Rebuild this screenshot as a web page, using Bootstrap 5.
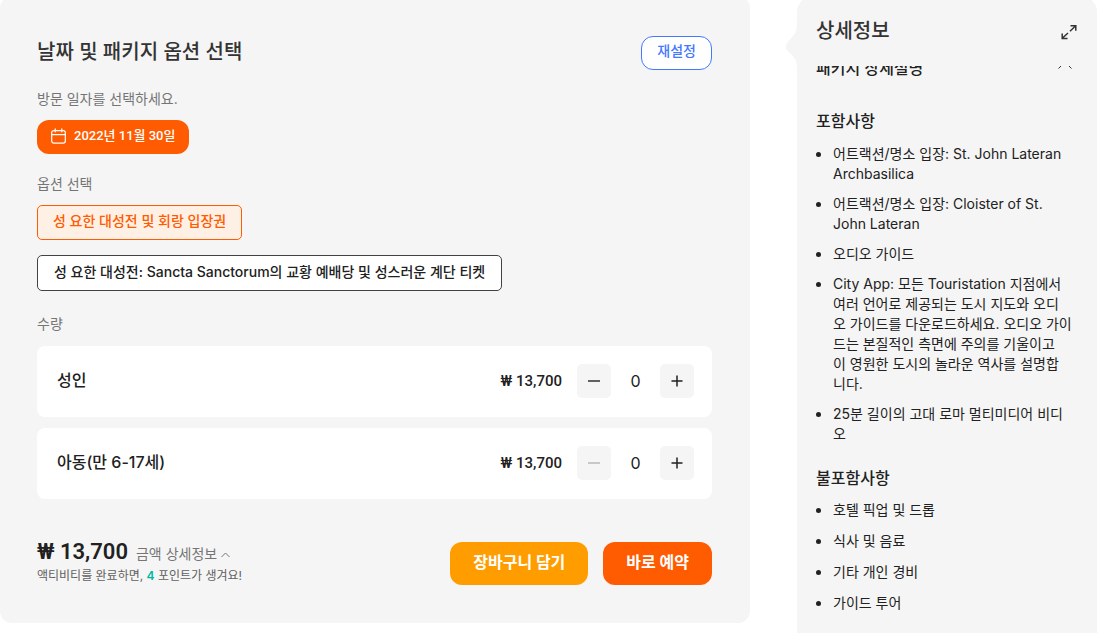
<!DOCTYPE html>
<html lang="ko">
<head>
<meta charset="utf-8">
<meta name="viewport" content="width=device-width, initial-scale=1">
<title>날짜 및 패키지 옵션 선택</title>
<link href="https://cdn.jsdelivr.net/npm/bootstrap@5.3.0/dist/css/bootstrap.min.css" rel="stylesheet">
<style>
  body { font-family: Inter, "Noto Sans CJK KR", sans-serif; font-size: 14px; line-height: 20px; color: #212121; background: #fff; overflow: hidden; }
  .page { gap: 47px; padding-right: 5px; height: 100vh; }
  .booking { background: #f5f5f5; border-radius: 12px; margin-top: -4px; padding: 40px 38px 34px 37px; min-width: 0; }
  .title { font-size: 20px; line-height: 28px; font-weight: 500; color: #333; margin: 0; padding-bottom: 2px; }
  .caption-text { color: #757575; display: block; }
  .visit-label { margin-top: 19px; }
  .option-label { margin-top: 20px; }
  .unit-label { margin-top: 23px; }
  .block { margin-top: 11px; }
  .btn { font-size: 14px; line-height: 20px; font-weight: 500; transition: none; }
  .btn-reset { --bs-btn-color: #4378ff; --bs-btn-border-color: #4378ff; --bs-btn-bg: #fff; border-radius: 12px; padding: 4px 15px 8px; }
  .btn-date { --bs-btn-color: #fff; --bs-btn-bg: #ff5b00; border: 0; border-radius: 12px; font-size: 13px; padding: 6px 14px 8px; gap: 8px; }
  .btn-option { --bs-btn-color: #212121; --bs-btn-border-color: #424242; --bs-btn-bg: #fff; border-radius: 5px; padding: 6px 16px 8px; }
  .btn-option.chosen { --bs-btn-color: #ff5b00; --bs-btn-border-color: #ff5b00; --bs-btn-bg: #fff0e5; padding: 5px 15px 8px; }
  .options { gap: 15px; }
  .units { gap: 11px; margin-top: 12px; }
  .unit { background: #fff; border-radius: 8px; padding: 18px 18px 19px 20px; }
  .unit-name { font-size: 16px; line-height: 24px; font-weight: 500; padding-bottom: 2px; }
  .digits { font-family: Roboto, "Noto Sans CJK KR", sans-serif; }
  .unit-price { font-size: 15px; font-weight: 500; margin-right: 15px; }
  .btn-step { --bs-btn-bg: #f5f5f5; --bs-btn-color: #212121; --bs-btn-disabled-bg: #f5f5f5; --bs-btn-disabled-color: #b5b5b5; --bs-btn-disabled-opacity: 1; border: 0; border-radius: 5px; width: 34px; height: 34px; padding: 0; }
  .qty { width: 49px; border: 0; background: none; text-align: center; font-size: 16px; padding: 0; color: #212121; }
  .checkout { margin-top: 39px; }
  .summary { padding-bottom: 3px; }
  .total { font-size: 22px; line-height: 28px; font-weight: 600; }
  .points { font-size: 12px; line-height: 20px; color: #616161; }
  .points strong { color: #00b8a0; font-weight: 600; }
  .actions { gap: 15px; }
  .btn-cta { --bs-btn-color: #fff; border: 0; border-radius: 12px; font-size: 16px; font-weight: 700; padding: 10px 23px 13px; }
  .btn-cart { --bs-btn-bg: #ff9d00; }
  .btn-now { --bs-btn-bg: #ff5b00; }
  .details { width: 300px; background: #f5f5f5; border-radius: 16px 16px 0 0; margin-top: -4px; }
  .notch { left: -12px; top: 19px; }
  .details-head { padding: 19px 20px 17px 19px; height: 70px; }
  .details-body { padding: 0 24px 0 19px; min-height: 0; }
  .section-head { margin: -10px 0 29px; height: 24px; }
  .section-head svg { margin: 5px 1px 0 0; }
  .subhead { font-size: 16px; line-height: 24px; font-weight: 500; margin: 0; }
  .dots li { display: flex; }
  .dots li::before { content: ""; flex: none; width: 5px; height: 5px; border-radius: 50%; background: #212121; margin: 8px 12px 0 0; }
  .included { gap: 10px; margin: 11px 0 22px; }
  .excluded { gap: 11px; margin: 10px 0 0; }
</style>
</head>
<body>
<div class="page d-flex align-items-start">
  <main class="booking flex-grow-1">
    <div class="d-flex justify-content-between align-items-center">
      <h1 class="title">날짜 및 패키지 옵션 선택</h1>
      <button type="button" class="btn btn-reset">재설정</button>
    </div>

    <span class="caption-text visit-label">방문 일자를 선택하세요.</span>
    <button type="button" class="btn btn-date digits d-flex align-items-center block">
      <svg width="15" height="16" viewBox="0 0 15 16" fill="none" stroke="currentColor" stroke-width="1.2" stroke-linecap="round" aria-hidden="true"><rect x=".7" y="2.7" width="13.6" height="12.4" rx="2"/><path d="M.7 6.6h13.6M4.2.8v3M10.8.8v3"/></svg>
      2022년 11월 30일
    </button>

    <span class="caption-text option-label">옵션 선택</span>
    <div class="options d-flex flex-column align-items-start block">
      <button type="button" class="btn btn-option chosen">성 요한 대성전 및 회랑 입장권</button>
      <button type="button" class="btn btn-option">성 요한 대성전: Sancta Sanctorum의 교황 예배당 및 성스러운 계단 티켓</button>
    </div>

    <span class="caption-text unit-label">수량</span>
    <div class="units d-flex flex-column">
      <div class="unit d-flex align-items-center">
        <label class="unit-name me-auto" for="adult">성인</label>
        <span class="unit-price digits">₩ 13,700</span>
        <button type="button" class="btn btn-step d-flex align-items-center justify-content-center" aria-label="성인 빼기"><svg width="14" height="14" viewBox="0 0 14 14" stroke="currentColor" stroke-width="1.4"><path d="M1 7h12"/></svg></button>
        <input class="qty" id="adult" type="text" inputmode="numeric" value="0">
        <button type="button" class="btn btn-step d-flex align-items-center justify-content-center" aria-label="성인 더하기"><svg width="14" height="14" viewBox="0 0 14 14" stroke="currentColor" stroke-width="1.5"><path d="M1.500 7h11M7 1.500v11"/></svg></button>
      </div>
      <div class="unit d-flex align-items-center">
        <label class="unit-name me-auto" for="child">아동(만 6-17세)</label>
        <span class="unit-price digits">₩ 13,700</span>
        <button type="button" class="btn btn-step d-flex align-items-center justify-content-center" aria-label="아동 빼기" disabled><svg width="14" height="14" viewBox="0 0 14 14" stroke="currentColor" stroke-width="1.4"><path d="M1 7h12"/></svg></button>
        <input class="qty" id="child" type="text" inputmode="numeric" value="0">
        <button type="button" class="btn btn-step d-flex align-items-center justify-content-center" aria-label="아동 더하기"><svg width="14" height="14" viewBox="0 0 14 14" stroke="currentColor" stroke-width="1.5"><path d="M1.500 7h11M7 1.500v11"/></svg></button>
      </div>
    </div>

    <div class="checkout d-flex justify-content-between align-items-center">
      <div class="summary">
        <div class="d-flex align-items-baseline gap-2">
          <span class="total digits">₩ 13,700</span>
          <a href="#" class="caption-text text-decoration-none">금액 상세정보 <svg width="9" height="6" viewBox="0 0 9 6" fill="none" stroke="currentColor" aria-hidden="true"><path d="M.5 5l4-4 4 4"/></svg></a>
        </div>
        <div class="points">액티비티를 완료하면, <strong>4</strong> 포인트가 생겨요!</div>
      </div>
      <div class="actions d-flex">
        <button type="button" class="btn btn-cta btn-cart">장바구니 담기</button>
        <button type="button" class="btn btn-cta btn-now">바로 예약</button>
      </div>
    </div>
  </main>

  <aside class="details position-relative flex-shrink-0 align-self-stretch d-flex flex-column">
    <svg class="notch position-absolute" width="13" height="54" viewBox="0 0 13 54" fill="#f5f5f5" aria-hidden="true"><path d="M12 4C12 14 11 18 8 21L2 28Q-.5 32 2 35L8 41C11 45 12 48 12 54H13V4z"/></svg>
    <div class="details-head d-flex justify-content-between align-items-center">
      <h2 class="title">상세정보</h2>
      <button type="button" class="btn p-0 border-0 d-flex" aria-label="크게 보기"><svg width="16" height="16" viewBox="0 0 16 16" fill="none" stroke="#333" stroke-width="1.5"><path d="M9.500 1.700h5.300v5M14.500 2L9 7.200M1.200 9.500v5h5.300M1.500 14L7 9"/></svg></button>
    </div>
    <div class="details-body overflow-hidden flex-grow-1">
      <div class="section-head d-flex justify-content-between align-items-start">
        <h3 class="subhead">패키지 상세설명</h3>
        <svg width="14" height="8" viewBox="0 0 14 8" fill="none" stroke="#333" aria-hidden="true"><path d="M.5 7.500L7 1l6.500 6.500"/></svg>
      </div>
      <h3 class="subhead">포함사항</h3>
      <ul class="dots included list-unstyled d-flex flex-column">
        <li>어트랙션/명소 입장: St. John Lateran Archbasilica</li>
        <li>어트랙션/명소 입장: Cloister of St. John Lateran</li>
        <li>오디오 가이드</li>
        <li><span>City App: 모든 Touristation 지점에서 여러 언어로 제공되는 도시 지도와 오디<br>오 가이드를 다운로드하세요. 오디오 가이<br>드는 본질적인 측면에 주의를 기울이고<br>이 영원한 도시의 놀라운 역사를 설명합<br>니다.</span></li>
        <li>25분 길이의 고대 로마 멀티미디어 비디오</li>
      </ul>
      <h3 class="subhead">불포함사항</h3>
      <ul class="dots excluded list-unstyled d-flex flex-column">
        <li>호텔 픽업 및 드롭</li>
        <li>식사 및 음료</li>
        <li>기타 개인 경비</li>
        <li>가이드 투어</li>
      </ul>
    </div>
  </aside>
</div>
<script src="https://cdn.jsdelivr.net/npm/bootstrap@5.3.0/dist/js/bootstrap.bundle.min.js"></script>
</body>
</html>
